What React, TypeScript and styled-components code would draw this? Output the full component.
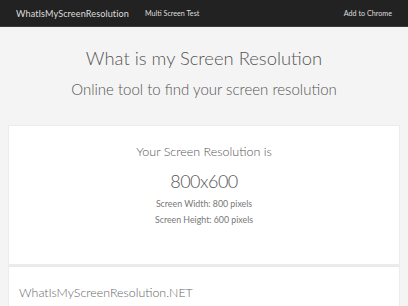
import React from 'react'
import styled, { createGlobalStyle } from 'styled-components'

const GlobalStyle = createGlobalStyle`
  html, body {
    margin: 0;
    padding: 0;
    background: #f4f4f4;
    font-family: Lato, "Open Sans", sans-serif;
    color: #555;
  }
`

const App: React.FC = () => {
  return (
    <>
      <GlobalStyle />
      <NavBar>
        <Brand>WhatIsMyScreenResolution</Brand>
        <NavLink>Multi Screen Test</NavLink>
        <Spacer />
        <NavLink>Add to Chrome</NavLink>
      </NavBar>
      <Hero>
        <Title>What is my Screen Resolution</Title>
        <Subtitle>Online tool to find your screen resolution</Subtitle>
      </Hero>
      <Container>
        <Card>
          <Lead>Your Screen Resolution is</Lead>
          <Big>800x600</Big>
          <Small>Screen Width: 800 pixels</Small>
          <Small>Screen Height: 600 pixels</Small>
        </Card>
        <FooterCard>
          <FooterText>WhatIsMyScreenResolution.NET</FooterText>
        </FooterCard>
      </Container>
    </>
  )
}

const NavBar = styled.div`
  display: flex;
  align-items: center;
  height: 26px;
  padding: 0 16px;
  background: #222;
  border-bottom: 1px solid #3a3a3a;
`

const Brand = styled.div`
  font-size: 9.1px;
  color: #ddd;
  margin-right: 16px;
  letter-spacing: 0.1px;
`

const NavLink = styled.div`
  font-size: 7.2px;
  color: #ddd;
`

const Spacer = styled.div`
  flex: 1;
`

const Hero = styled.div`
  display: flex;
  flex-direction: column;
  align-items: center;
  padding-top: 17px;
  height: 98px;
  box-sizing: border-box;
`

const Title = styled.h1`
  margin: 0;
  font-size: 18.4px;
  font-weight: 300;
  color: #555;
  line-height: 28px;
`

const Subtitle = styled.h2`
  margin: 6px 0 0;
  font-size: 15px;
  font-weight: 300;
  color: #555;
  line-height: 22px;
`

const Container = styled.div`
  padding: 0 8px;
`

const Card = styled.div`
  display: flex;
  flex-direction: column;
  align-items: center;
  background: #fff;
  border: 1px solid #ececec;
  padding: 17px 0 36px;
`

const Lead = styled.div`
  font-size: 12.5px;
  font-weight: 300;
  line-height: 18px;
`

const Big = styled.div`
  font-size: 18px;
  font-weight: 300;
  letter-spacing: -0.5px;
  line-height: 24px;
  margin-top: 8px;
  margin-bottom: 3px;
`

const Small = styled.div`
  font-size: 8.8px;
  line-height: 16px;
  color: #777;
`

const FooterCard = styled.div`
  background: #fff;
  border: 1px solid #ececec;
  border-top: 2px solid #eaeaea;
  padding: 18px 10px 20px;
`

const FooterText = styled.div`
  font-size: 12.4px;
  font-weight: 300;
  color: #666;
`

export default App
